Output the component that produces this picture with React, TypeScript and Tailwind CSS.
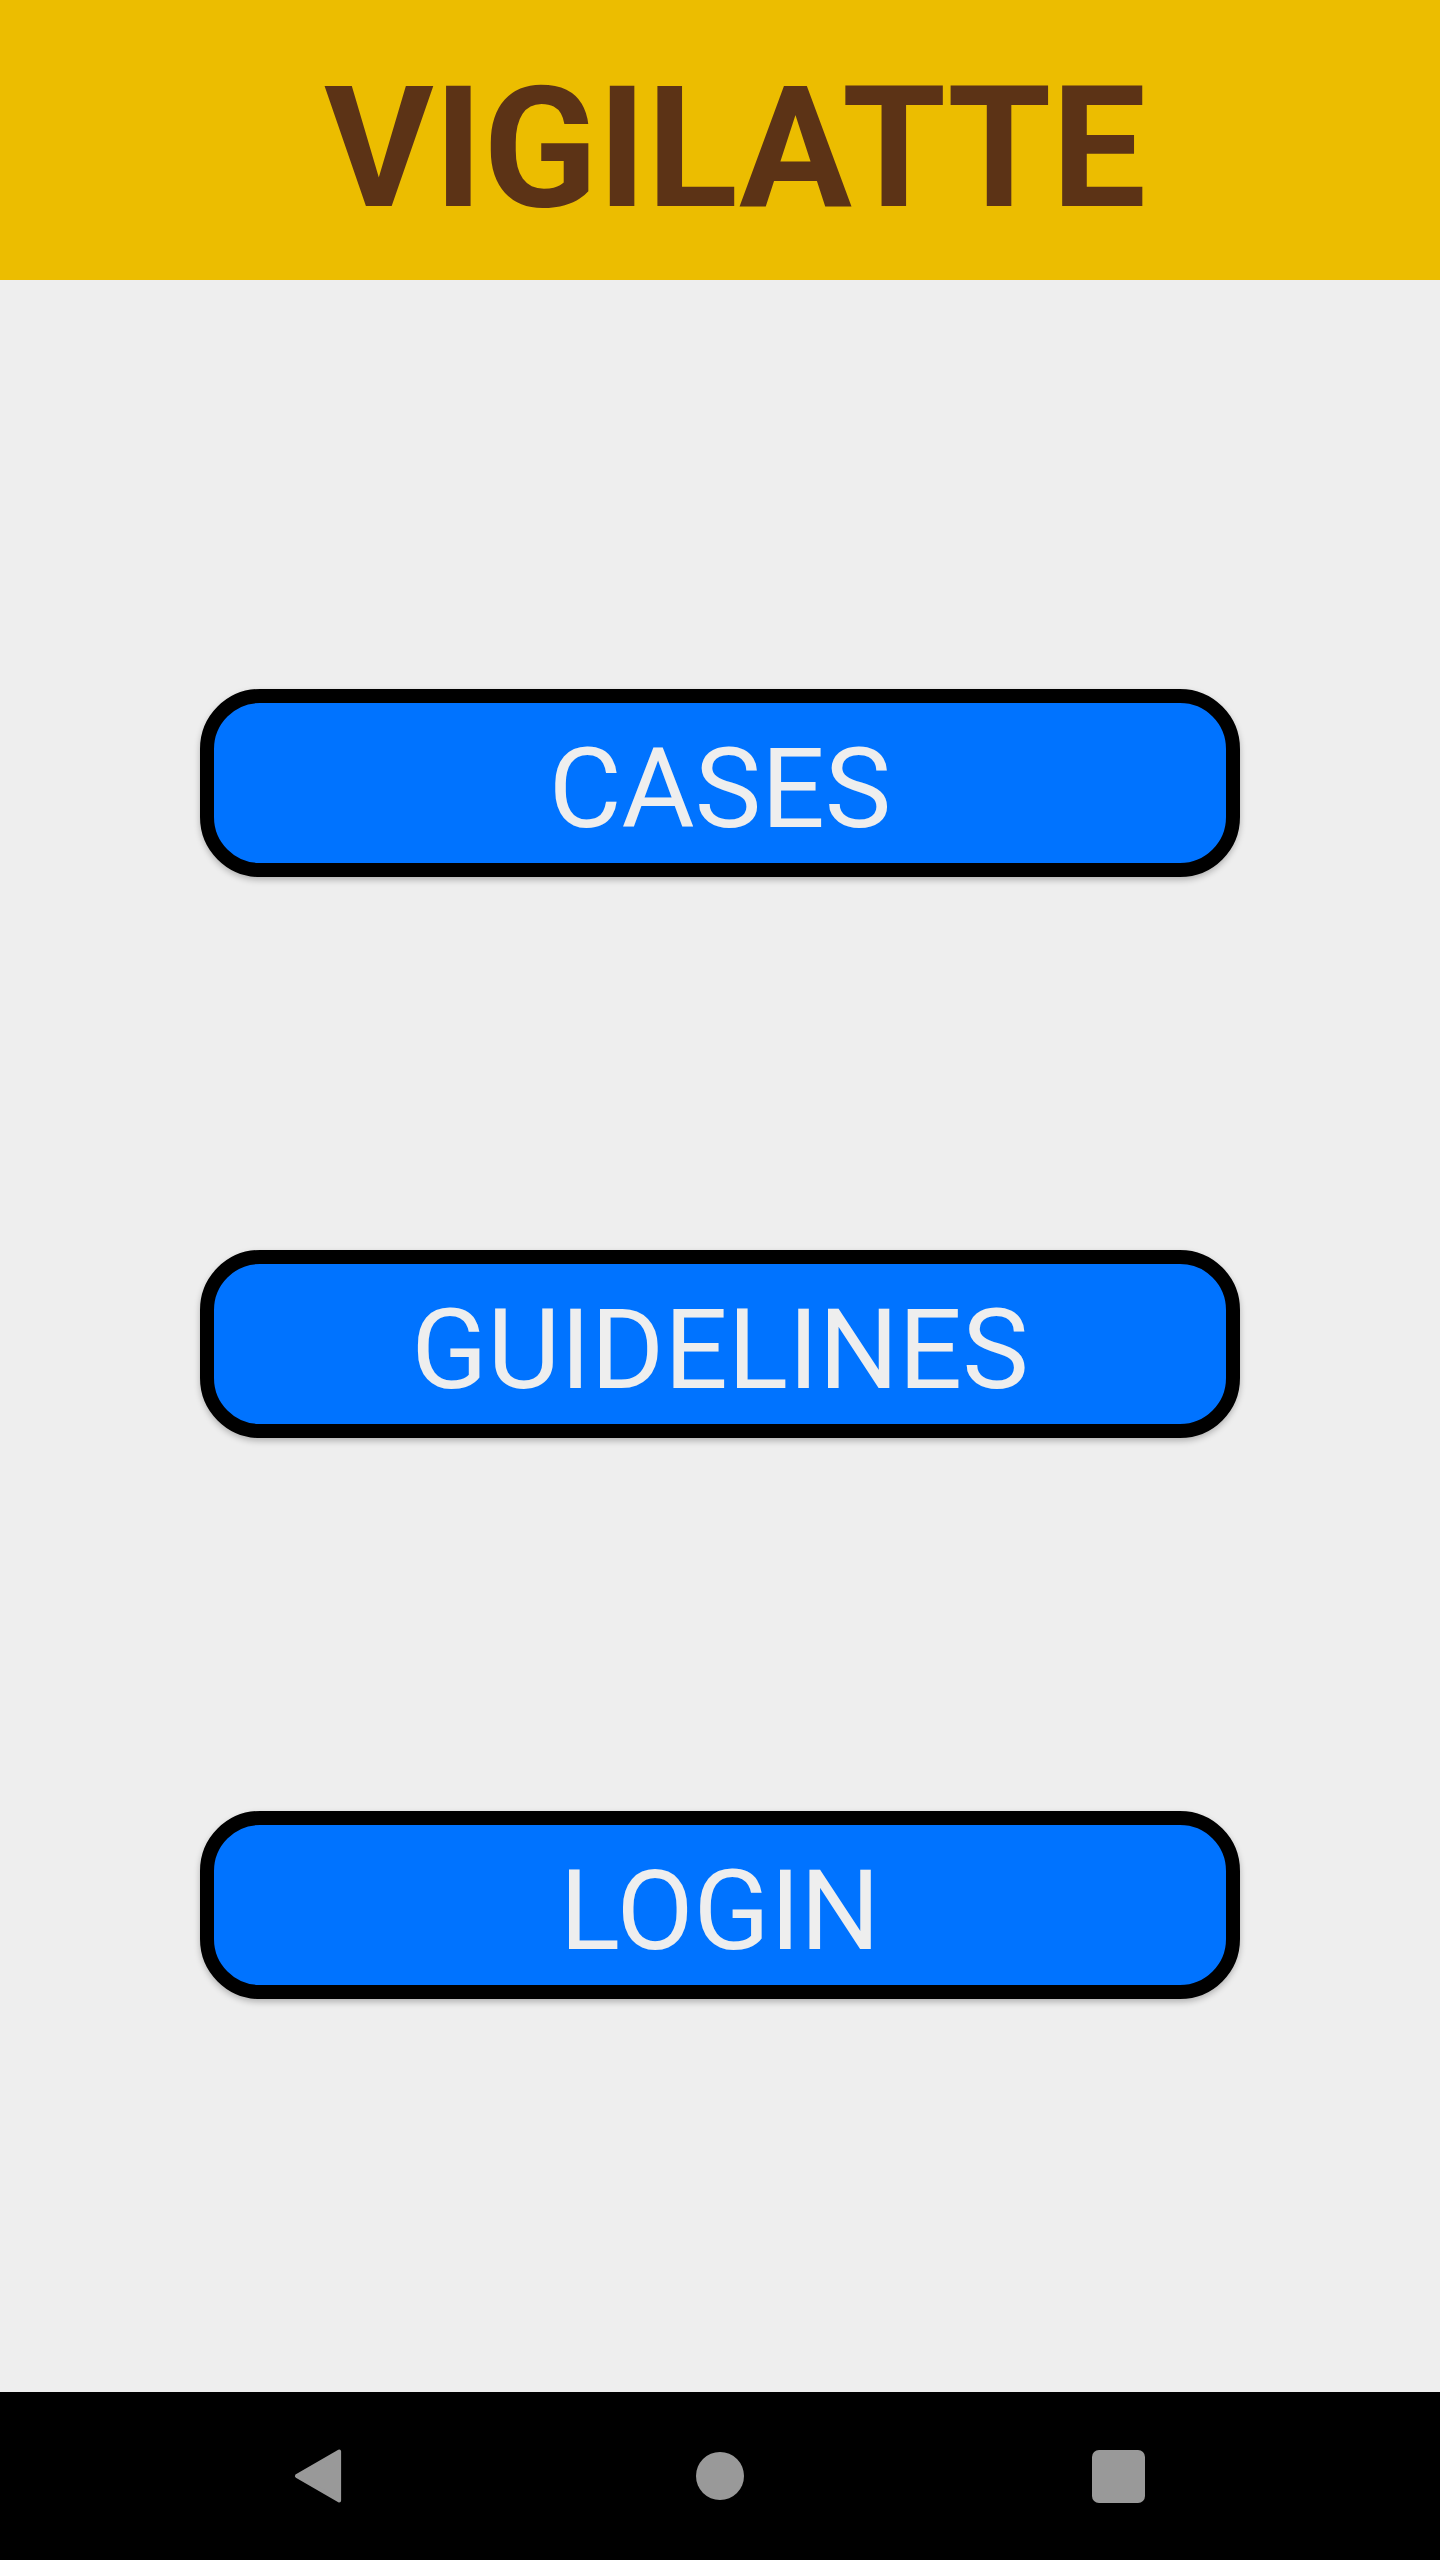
import React from "react";

const buttons = ["CASES", "GUIDELINES", "LOGIN"];

function MenuButton({ label }: { label: string }) {
  return (
    <button
      type="button"
      className="flex h-[188px] w-[1040px] items-center justify-center rounded-[60px] border-[14px] border-black bg-[#0073ff] pt-[11px] text-[112px] leading-none font-normal text-[#eeeeee] shadow-[0_3px_6px_rgba(0,0,0,0.25)]"
    >
      {label}
    </button>
  );
}

export default function App() {
  return (
    <div className="flex h-[2560px] w-[1440px] flex-col bg-[#eeeeee] font-['Roboto',sans-serif]">
      {/* Title bar */}
      <header className="flex h-[280px] shrink-0 items-center justify-center bg-[#ecbd00] pt-[18px] pl-[30px]">
        <h1 className="text-[168px] leading-none font-bold text-[#5c3316]">VIGILATTE</h1>
      </header>

      {/* Menu */}
      <main className="flex flex-1 flex-col items-center gap-[373px] pt-[409px]">
        {buttons.map((b) => (
          <MenuButton key={b} label={b} />
        ))}
      </main>

      {/* Android nav bar */}
      <nav className="flex h-[168px] shrink-0 items-center justify-center gap-[342px] bg-black">
        <div className="flex w-[56px] justify-center pr-[7px]">
          <svg width="52" height="58" viewBox="0 0 52 58">
            <polygon
              points="48,3 48,55 3,29"
              fill="#999999"
              stroke="#999999"
              strokeWidth="4"
              strokeLinejoin="round"
            />
          </svg>
        </div>
        <div className="flex w-[56px] justify-center">
          <span className="block h-[48px] w-[48px] rounded-full bg-[#999999]" />
        </div>
        <div className="flex w-[56px] justify-center">
          <span className="block h-[53px] w-[53px] rounded-[7px] bg-[#999999]" />
        </div>
      </nav>
    </div>
  );
}
